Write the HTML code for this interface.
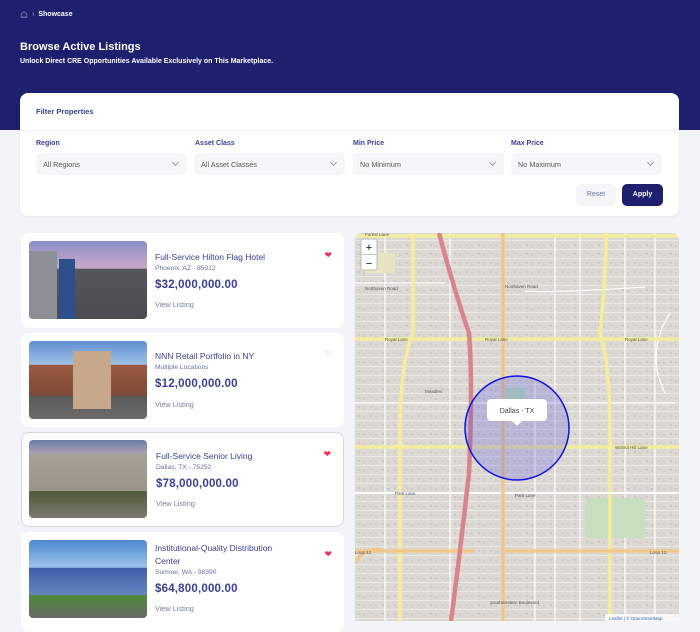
<!DOCTYPE html>
<html><head><meta charset="utf-8"><style>
*{box-sizing:border-box;margin:0;padding:0}
body{width:700px;height:621px;overflow:hidden;background:#f3f4f8;font-family:"Liberation Sans",sans-serif;position:relative}
.hdr{position:absolute;left:0;top:0;width:700px;height:130px;background:#1e1f6e}
.crumb{position:absolute;left:20px;top:10px;color:#fff;font-size:7px;font-weight:bold;display:flex;align-items:center;gap:4px}
h1{position:absolute;left:20px;top:41px;color:#fff;font-size:11px;font-weight:bold}
.sub{position:absolute;left:20px;top:58px;color:#fff;font-size:7px;font-weight:bold}
.filter{position:absolute;left:20px;top:93px;width:659px;height:123px;background:#fff;border-radius:8px;box-shadow:0 1px 3px rgba(0,0,0,.06)}
.ft{position:absolute;left:16px;top:14px;color:#3b3f95;font-size:7.5px;font-weight:bold}
.div{position:absolute;left:0;top:37px;width:100%;height:1px;background:#f0f0f4}
.lab{position:absolute;top:47px;color:#3b3f95;font-size:7px;font-weight:bold}
.sel{position:absolute;top:60px;width:151px;height:22px;background:#f6f6f8;border-radius:5px;color:#555;font-size:7.3px;padding:7px 7px}
.sel:after{content:"";position:absolute;right:9px;top:7px;width:4px;height:4px;border-right:1px solid #999;border-bottom:1px solid #999;transform:rotate(45deg)}
.btn{position:absolute;top:91px;height:22px;border-radius:5px;font-size:7px;text-align:center;line-height:22px}
.card{position:absolute;left:21px;width:323px;background:#fff;border-radius:8px}
.img{position:absolute;left:8px;top:8px;width:118px;height:78px;border-radius:4px;overflow:hidden}
.t{position:absolute;left:134px;color:#3b3f95;font-size:8.5px;line-height:13px;width:150px}
.l{position:absolute;left:134px;color:#6a6fa5;font-size:6.7px}
.p{position:absolute;left:134px;color:#3b3f95;font-size:11.5px;letter-spacing:.2px;font-weight:bold}
.v{position:absolute;left:134px;color:#7b7fa8;font-size:7.3px}
.h{position:absolute;right:12px;font-size:9px;color:#e63a58}
.map{position:absolute;left:355px;top:233px;width:324px;height:388px;border-radius:8px 8px 0 0;overflow:hidden;background:#dcd7d2}
</style></head><body>
<div class="hdr"></div>
<div class="crumb"><svg width="8" height="8" viewBox="0 0 10 10"><path d="M1.5 5L5 2l3.5 3v4h-7z" fill="none" stroke="#8a8ab8" stroke-width="1"/></svg><span style="color:#8a8ab8">›</span>Showcase</div>
<h1>Browse Active Listings</h1>
<div class="sub">Unlock Direct CRE Opportunities Available Exclusively on This Marketplace.</div>
<div class="filter">
<div class="ft">Filter Properties</div><div class="div"></div>
<div class="lab" style="left:16px">Region</div><div class="sel" style="left:16px">All Regions</div>
<div class="lab" style="left:175px">Asset Class</div><div class="sel" style="left:174px">All Asset Classes</div>
<div class="lab" style="left:333px">Min Price</div><div class="sel" style="left:333px">No Minimum</div>
<div class="lab" style="left:491px">Max Price</div><div class="sel" style="left:491px">No Maximum</div>
<div class="btn" style="left:556px;width:40px;background:#f6f6f8;color:#6a6fa5">Reset</div>
<div class="btn" style="left:602px;width:41px;background:#1e1f6e;color:#fff;font-weight:bold">Apply</div>
</div>

<div class="card" style="top:233px;height:95px">
<div class="img" style="background:linear-gradient(180deg,#8a8fc8 0%,#c9a8c8 35%,#55575c 36%,#4a4c52 100%)"><div style="position:absolute;left:30px;top:18px;width:16px;height:60px;background:#2d4f8c"></div><div style="position:absolute;left:0;top:10px;width:28px;height:70px;background:#8d8f96"></div></div>
<div class="t" style="top:18px">Full-Service Hilton Flag Hotel</div>
<div class="l" style="top:32px">Phoenix, AZ - 85012</div>
<div class="p" style="top:46px">$32,000,000.00</div>
<div class="v" style="top:67px">View Listing</div>
<div class="h" style="top:17px">❤</div></div>

<div class="card" style="top:333px;height:94px">
<div class="img" style="background:linear-gradient(180deg,#5f8fd0 0%,#9fc0e8 30%,#9a5a40 31%,#7d4a38 70%,#5a5a5a 71%,#6b6b6b 100%)"><div style="position:absolute;left:44px;top:10px;width:38px;height:58px;background:#c8a88a"></div></div>
<div class="t" style="top:17px">NNN Retail Portfolio in NY</div>
<div class="l" style="top:31px">Multiple Locations</div>
<div class="p" style="top:45px">$12,000,000.00</div>
<div class="v" style="top:67px">View Listing</div>
<div class="h" style="top:16px;color:#f08a9c">♡</div></div>

<div class="card" style="top:432px;height:95px;border:1px solid #d4d5e2">
<div class="img" style="left:7px;top:7px;background:linear-gradient(180deg,#6a7ea8 0%,#b0a0b0 18%,#a7a196 19%,#9c9488 65%,#4f5a3a 66%,#7d7a70 100%)"></div>
<div class="t" style="top:17px">Full-Service Senior Living</div>
<div class="l" style="top:31px">Dallas, TX - 75252</div>
<div class="p" style="top:45px">$78,000,000.00</div>
<div class="v" style="top:66px">View Listing</div>
<div class="h" style="top:16px">❤</div></div>

<div class="card" style="top:532px;height:100px">
<div class="img" style="background:linear-gradient(180deg,#4f88d0 0%,#9cc4ee 35%,#3d5ea8 36%,#6486c0 70%,#4d8a3a 71%,#6a6a6a 100%)"></div>
<div class="t" style="top:10px;width:138px">Institutional-Quality Distribution Center</div>
<div class="l" style="top:37px">Sumner, WA - 98390</div>
<div class="p" style="top:51px">$64,800,000.00</div>
<div class="v" style="top:72px">View Listing</div>
<div class="h" style="top:17px">❤</div></div>

<div class="map">
<svg width="324" height="388" viewBox="0 0 324 388">
<defs><pattern id="st" width="12" height="9" patternUnits="userSpaceOnUse"><rect width="12" height="9" fill="#dcd8d4"/><rect y="7" width="12" height="1" fill="#ebe8e5"/><rect x="3" y="2" width="2" height="2" fill="#d2c7c2"/><rect x="8" y="3" width="2" height="2" fill="#d2c7c2"/></pattern></defs>
<rect width="324" height="388" fill="url(#st)"/>
<g stroke="#fff" stroke-width="1.2" fill="none">
<path d="M0 50H90M170 58Q200 60 290 54M0 170H320M30 0V388M95 0V388M200 0V388M225 0V388M270 0V388M300 0V388"/>
<path d="M180 150V388M315 80Q290 120 310 160"/>
</g>
<rect x="230" y="265" width="60" height="40" fill="#c8dfc0"/>
<rect x="150" y="155" width="20" height="25" fill="#b8e0b8"/>
<rect x="10" y="20" width="30" height="20" fill="#e8e4c0"/>
<g stroke="#f4ee9c" stroke-width="3.5" fill="none">
<path d="M0 106H324M0 214H324M0 3H324"/>
<path d="M58 0V100Q45 130 45 200V388"/>
<path d="M251 0Q250 60 245 100Q255 130 255 200V388"/>
</g>
<path d="M0 318H120M150 318H324" stroke="#f2c88a" stroke-width="3.5"/>
<path d="M0 330Q10 312 30 318" stroke="#f2c88a" stroke-width="3.5" fill="none"/>
<path d="M0 260H324" stroke="#fff" stroke-width="2"/>
<path d="M148 0V388" stroke="#f2c88a" stroke-width="3.5"/>
<path d="M84 0Q100 60 114 100Q118 150 114 240Q105 320 96 388" stroke="#d8848c" stroke-width="4.5" fill="none"/>
<g font-size="4.5" fill="#555" font-family="Liberation Sans,sans-serif">
<text x="10" y="57">Northaven Road</text><text x="270" y="108">Royal Lane</text><text x="30" y="108">Royal Lane</text><text x="130" y="108">Royal Lane</text>
<text x="260" y="216">Walnut Hill Lane</text><text x="40" y="262">Park Lane</text><text x="160" y="264">Park Lane</text><text x="0" y="321">Loop 12</text><text x="295" y="321">Loop 12</text>
<text x="150" y="55">Northaven Road</text><text x="135" y="371">Southwestern Boulevard</text><text x="70" y="160">Meaders</text><text x="10" y="3">Forest Lane</text>
</g>
<circle cx="162" cy="195" r="52" fill="rgba(80,80,220,.25)" stroke="#1010e0" stroke-width="1.5"/>
<rect x="132" y="166" width="60" height="22" rx="4" fill="#fff"/>
<path d="M157 188l5 5 5-5z" fill="#fff"/>
<text x="162" y="180" font-size="7" fill="#444" text-anchor="middle" font-family="Liberation Sans,sans-serif">Dallas - TX</text>
<rect x="6" y="6" width="16" height="31" rx="2" fill="#fff" stroke="#bbb" stroke-width="1"/>
<path d="M6 21.5H22" stroke="#ccc"/>
<text x="14" y="18" font-size="11" text-anchor="middle" fill="#000" font-family="Liberation Sans,sans-serif">+</text>
<text x="14" y="34" font-size="11" text-anchor="middle" fill="#000" font-family="Liberation Sans,sans-serif">−</text>
<rect x="250" y="381" width="74" height="7" fill="rgba(255,255,255,.8)"/>
<text x="254" y="387" font-size="4.5" fill="#3a6ab0" font-family="Liberation Sans,sans-serif">Leaflet | © OpenStreetMap</text>
</svg>
</div>
</body></html>
